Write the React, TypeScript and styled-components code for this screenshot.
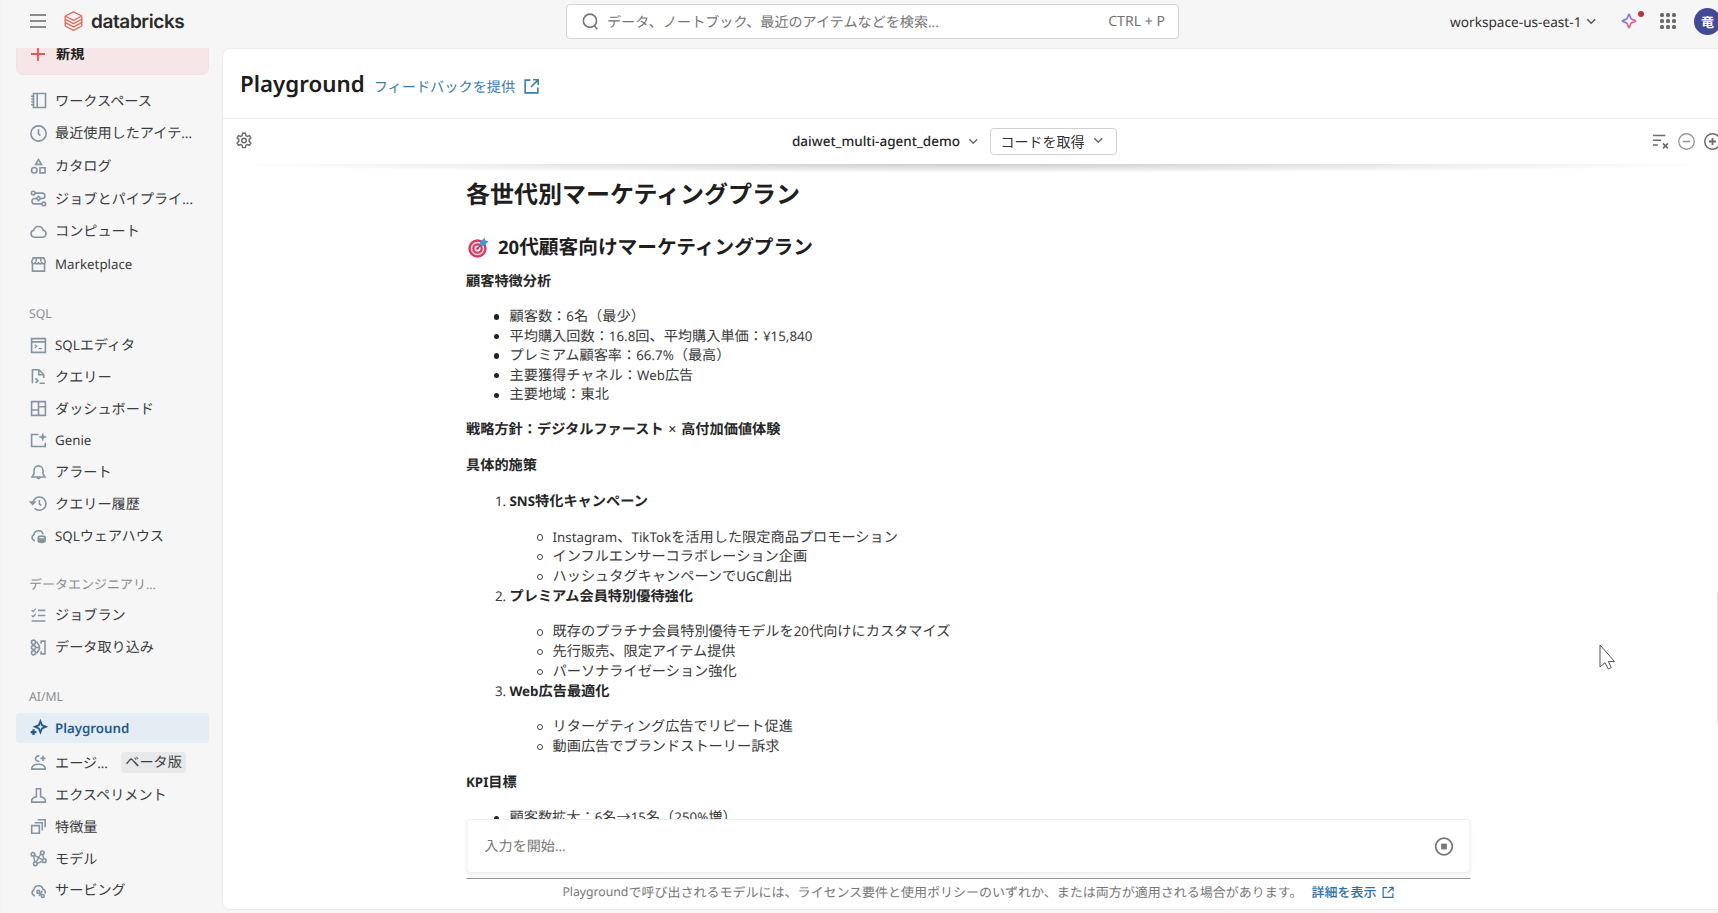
import React from 'react';
import styled, { createGlobalStyle, css } from 'styled-components';

const GlobalStyle = createGlobalStyle`
  *, *::before, *::after { box-sizing: border-box; }
  html, body { margin: 0; padding: 0; overflow: hidden; background: #f6f6f6; }
  body {
    font-family: "Noto Sans", "Noto Sans CJK JP", sans-serif;
    font-size: 14.15px;
    color: #333;
    text-rendering: geometricPrecision;
  }
  h1, h2, h3, p, ul, ol { margin: 0; padding: 0; font-weight: inherit; }
`;

/* Latin runs are set slightly smaller than the surrounding Japanese. */
const Latin = styled.span<{ $scale: number }>`
  font-size: ${(p) => p.$scale}em;
`;

function T({ children, scale = 0.94 }: { children: string; scale?: number }) {
  const parts = children.split(/([\x20-\x7e¥]+)/).filter(Boolean);
  return (
    <>
      {parts.map((part, i) =>
        /^[\x20-\x7e¥]/.test(part) ? (
          <Latin key={i} $scale={scale}>{part}</Latin>
        ) : (
          <React.Fragment key={i}>{part}</React.Fragment>
        ),
      )}
    </>
  );
}

/* ---------- icons ---------- */

const Svg = styled.svg<{ $w?: number }>`
  display: block;
  flex: none;
  width: ${(p) => p.$w ?? 18}px;
  height: ${(p) => p.$w ?? 18}px;
  fill: none;
  stroke: currentColor;
  stroke-width: 1.5;
  overflow: visible;
`;

const icons: Record<string, React.ReactNode> = {
  workspace: <><path d="M3.2 1.4h11.400v13.200H3.200zM6.8 1.400v13.200" /><path d="M1 4h3M1 6.700h3M1 9.300h3M1 12h3" strokeWidth="1.2" /></>,
  clock: <><circle cx="8" cy="8" r="7.2" /><path d="M8 4v4.2l1.800 1.800" /></>,
  catalog: <><path d="M8 1.4 10.8 6H5.2z" /><circle cx="4" cy="11.5" r="2.6" /><path d="M9.4 9.2h4.8v4.8H9.4z" /></>,
  jobs: <><circle cx="3" cy="2.9" r="1.7" /><circle cx="13" cy="13.1" r="1.7" /><path d="M4.7 2.9h6.8a2.5 2.5 0 0 1 0 5.1H10M6 8H4.4a2.5 2.5 0 0 0 0 5.1h6.8M8 6l2 2-2 2-2-2z" /></>,
  cloud: <path d="M4 13.4a3.300 3.300 0 0 1-.5-6.500 4.600 4.600 0 0 1 9 0 3.300 3.300 0 0 1-.5 6.500z" />,
  market: <><path d="M2.3 7v7.2h11.4V7M3 1.8h10l1.4 3.6c0 2.3-3.1 2.6-3.2.3 0 2.3-3.1 2.3-3.2 0 0 2.3-3.1 2.3-3.2 0-.1 2.3-3.2 2-3.2-.3z" /><path d="M5.8 2v3.5M10.2 2v3.5" /></>,
  editor: <><path d="M1.5 1.500h13v13h-13zM1.500 4.600h13" /><path d="m4.5 7.2 1.8 1.6-1.8 1.6M8 10.9h3.2" strokeWidth="1.2" /></>,
  query: <><path d="M2.3 14.3V1.7h6.2l4.4 4.4v3.2M8.2 1.9v4.4h4.6" /><path d="m5.2 9.8 2.3 2.1-2.3 2.1M9 14.3h5" /></>,
  dashboard: <path d="M1.500 1.500h13v13h-13zM8 1.500v13M1.500 9.400H8M8 6.300h6.500" />,
  genie: <><path d="M8 2.4H1.500v11.200h12.800V10" /><path d="m12 1.2.9 2.6 2.6.9-2.6.9-.9 2.6-.9-2.6-2.6-.9 2.6-.9z" fill="currentColor" strokeWidth=".5" /></>,
  bell: <><path d="M2 12.2h12l-1.8-3V6a4.2 4.2 0 0 0-8.4 0v3.2z" /><path d="M6.3 12.5a1.8 1.8 0 0 0 3.4 0" /></>,
  history: <><path d="M2.6 8a6.2 6.2 0 1 1 1.7 4.4M8.8 4.8v3.6l1.8 1.5" /><path d="m.6 6.7 2 2.1 2-2.1z" fill="currentColor" /></>,
  warehouse: <><path d="M4.7 12.8H4a3 3 0 0 1-.3-5.6 4.4 4.4 0 0 1 8.6-.3" /><ellipse cx="11" cy="10" rx="3.2" ry="1.4" /><path d="M7.8 10v3.2c0 1.7 6.4 1.7 6.4 0V10M7.8 12.2c.8 1 5.6 1 6.4 0" /></>,
  runs: <><path d="M7.5 3.2h7M7.5 8h7M1.5 13.2h13" /><path d="m1.5 3.1 1.4 1.3 2.5-2.8M1.5 7.9l1.4 1.3 2.5-2.8" strokeWidth="1.2" /></>,
  ingest: <><circle cx="3.3" cy="3" r="1.9" /><circle cx="3.3" cy="8" r="1.9" /><circle cx="3.3" cy="13" r="1.9" /><path d="M5.2 3h1.4l2.2 3.5v3L6.6 13H5.2M5.2 8h3.6M10.5 4.5V2h3.6v12h-3.6v-2.5" /></>,
  playground: <><path d="m9.8 1.2 1.5 3.7L15 6.4l-3.7 1.5-1.5 3.7-1.5-3.7-3.7-1.5 3.7-1.5z" strokeWidth="1.7" /><path d="M3.3 8.8v5.4M.6 11.5H6" strokeWidth="2.1" /></>,
  agent: <><path d="M1.6 14.2h12.8c0-3-2.6-4.6-6.4-4.6s-6.4 1.6-6.4 4.6z" /><path d="M8.8 1.8C4 1.2 4 7.6 8.8 6.8M12.2 1.6v5M9.8 4.1h4.8" /></>,
  experiment: <path d="M5.2 1.7h5.6M6 1.7v7.5l-2.8.9-1.6 2v2.1h12.8v-2.1l-1.6-2-2.8-.9V1.7" />,
  features: <path d="M1.6 7.2h7.2v7.2H1.6zM4.4 4.5h7.2v7.2M7.3 1.7h7v7" />,
  models: <><circle cx="2.8" cy="4" r="1.7" /><circle cx="11.6" cy="2.6" r="1.7" /><circle cx="13.4" cy="10" r="1.7" /><circle cx="5" cy="13" r="1.7" /><path d="m4.3 5 7.6 4.3M10.2 3.6 5.7 11.6M12 4.3l1 4.1M3.3 5.6l1.3 5.8M6.7 12.6l5.2-2" strokeWidth="1.3" /></>,
  serving: <><path d="M4.7 12.8H4a3 3 0 0 1-.3-5.6 4.4 4.4 0 0 1 8.6-.3c2.6 1 2.3 3 1.7 4" /><circle cx="7.8" cy="9.3" r="1.4" /><circle cx="12" cy="13.2" r="1.4" /><path d="m8.6 10.3 2.5 2.1M11.5 8.2 8.6 13" /></>,
  gear: <><path d="M6.8 1.2h2.4l.4 2 1.3.7 2-.7 1.2 2-1.5 1.5v1.5l1.5 1.5-1.2 2.1-2-.7-1.3.8-.4 2H6.8l-.4-2-1.3-.8-2 .7-1.2-2.1 1.5-1.5V6.7L1.9 5.2l1.2-2 2 .7 1.3-.7z" strokeWidth="1.3" /><circle cx="8" cy="7.6" r="2" strokeWidth="1.3" /></>,
  external: <><path d="M7 2H2v12h12V9" /><path d="M9.5 1.7h4.8v4.8M14 2 7.5 8.5" /></>,
  chevron: <path d="m3 5.5 5 5 5-5" strokeWidth="1.9" />,
  search: <><circle cx="7.5" cy="7.3" r="6.2" /><path d="m11.6 12 2.9 3" /></>,
  clear: <><path d="M1 2.3h11.5M1 6.8h7.5M1 11.3h4.5" /><path d="m10.3 9.8 4.6 4.7M14.9 9.8l-4.6 4.7" /></>,
  minus: <><circle cx="8" cy="8" r="7.3" strokeWidth="1.3" /><path d="M4.5 8h7" /></>,
  plus: <><circle cx="8" cy="8" r="7.3" strokeWidth="1.4" /><path d="M4.7 8h6.6M8 4.7v6.6" strokeWidth="1.7" /></>,
  stop: <><circle cx="8" cy="8" r="7" /><path d="M5.6 5.6h4.8v4.8H5.6z" fill="currentColor" stroke="none" /></>,
  add: <path d="M8 1v14M1 8h14" strokeWidth="1.8" />,
};

function Icon({ name, w }: { name: string; w?: number }) {
  return <Svg viewBox="0 0 16 16" $w={w}>{icons[name]}</Svg>;
}

/* ---------- top bar ---------- */

const Shell = styled.div`
  width: 1718px;
  height: 913px;
  overflow: hidden;
  display: flex;
  flex-direction: column;
  border-left: 3px solid #f2f4f5;
  background: #f6f6f6;
  position: relative;
`;

const TopBar = styled.header`
  height: 48px;
  flex: none;
  display: grid;
  grid-template-columns: 563px 613px 1fr;
  padding-bottom: 5px;
`;

const Brand = styled.div`
  display: flex;
  align-items: center;
  padding: 0 0 1px 27px;
`;

const Burger = styled.span`
  width: 16px;
  height: 14px;
  border-top: 2px solid #8a8a8a;
  border-bottom: 2px solid #8a8a8a;
  display: flex;
  align-items: center;
  margin-right: 18px;
  &::after { content: ''; height: 2px; flex: 1; background: #8a8a8a; }
`;

const BrandName = styled.span`
  font: 600 19px/24px Inter, sans-serif;
  letter-spacing: -0.4px;
  color: #2b2b2b;
  margin: 1px 0 0 8px;
`;

const SearchBox = styled.div`
  margin-top: 4px;
  height: 35px;
  border: 1px solid #d3d5d6;
  border-radius: 4px;
  background: #fff;
  display: flex;
  align-items: center;
  padding: 0 13px 0 15px;
  font-size: 14.1px;
  color: #757575;
`;

const SearchText = styled.span`
  flex: 1;
  margin-left: 8px;
`;

const Tools = styled.div`
  display: flex;
  align-items: center;
  justify-content: flex-end;
  margin-right: -3px;
  padding-bottom: 1px;
  color: #555;
`;

const WorkspaceName = styled.span`
  font-size: 13.65px;
  color: #333;
  margin-right: 3px;
`;

const SparkleWrap = styled.span`
  position: relative;
  margin: 0 23px 0 24px;
`;

const Dot = styled.i`
  position: absolute;
  width: 6px;
  height: 6px;
  border-radius: 50%;
  background: #b8343f;
  right: -7px;
  top: -2px;
`;

const AppGrid = styled.span`
  display: grid;
  grid-template-columns: repeat(3, 4px);
  gap: 2px;
  margin-right: 18px;
  i { width: 4px; height: 4px; border-radius: 1.5px; background: #6a6a6a; }
`;

const Avatar = styled.span`
  width: 27px;
  height: 27px;
  flex: none;
  border-radius: 50%;
  background: #434a94;
  color: #fff;
  font-size: 13px;
  font-weight: 700;
  display: grid;
  place-items: center;
`;

/* ---------- sidebar ---------- */

const Body = styled.div`
  flex: 1;
  min-height: 0;
  display: flex;
`;

const Sidebar = styled.nav`
  width: 219px;
  flex: none;
  padding: 0 13px;
  color: #8594a3;
`;

const NewButton = styled.div`
  height: 27px;
  border: 1px solid #f8dfdf;
  border-top: 0;
  border-radius: 0 0 7px 7px;
  background: #f7e6e7;
  display: flex;
  align-items: center;
  gap: 10px;
  padding: 0 14px 14px 13px;
  color: #e0555a;
  overflow: hidden;
  span { color: #222; font-weight: 700; }
`;

const Group = styled.div<{ $gap: number }>`
  padding-top: ${(p) => p.$gap}px;
`;

const GroupLabel = styled.div<{ $h: number }>`
  height: ${(p) => p.$h}px;
  line-height: 20px;
  padding-left: 13px;
  font-size: 13px;
  color: #8a8d90;
`;

const NavItem = styled.div<{ $h: number; $active?: boolean }>`
  height: ${(p) => p.$h}px;
  display: flex;
  align-items: center;
  gap: 8.5px;
  padding-left: 13.5px;
  white-space: nowrap;
  > span { color: #3a3d40; }
  ${(p) =>
    p.$active &&
    css`
      background: #e6ecf3;
      border-radius: 4px;
      color: #1f5b8f;
      margin-bottom: 3px;
      > span { color: #1f5b8f; font-weight: 600; }
    `}
`;

const Badge = styled.em`
  font-style: normal;
  color: #3a3d40;
  background: #e8e9ea;
  border-radius: 4px;
  line-height: 21px;
  padding: 0 4.5px;
  margin-left: 4.5px;
`;

/* ---------- main panel ---------- */

const Panel = styled.main`
  flex: 1;
  min-width: 0;
  height: 862px;
  background: #fff;
  border: 1px solid #eaedef;
  border-right: 0;
  border-radius: 8px 0 0 8px;
  display: flex;
  flex-direction: column;
`;

const PanelHeader = styled.div`
  height: 70px;
  flex: none;
  border-bottom: 1px solid #e9ecee;
  display: flex;
  align-items: center;
  padding: 0 0 0 17px;
  color: #3a7db3;
`;

const Title = styled.h1`
  font-size: 22.3px;
  font-weight: 600;
  line-height: 30px;
  color: #1c1c1c;
  margin-right: 9px;
`;

const Feedback = styled.a`
  font-size: 14.2px;
  display: flex;
  align-items: center;
  gap: 8px;
  padding-top: 6px;
`;

const Toolbar = styled.div`
  height: 45px;
  flex: none;
  display: grid;
  grid-template-columns: 557px 1fr auto;
  align-items: center;
  padding: 0 0 1px 12px;
  color: #6a6a6a;
`;

const ModelPicker = styled.div`
  display: flex;
  align-items: center;
`;

const ModelName = styled.span`
  font-size: 13.5px;
  font-weight: 500;
  color: #262626;
  margin-right: 7px;
`;

const CodeButton = styled.button`
  margin-left: 11px;
  width: 127px;
  height: 27px;
  padding: 0 12px 1px 9px;
  border: 1px solid #cfd1d3;
  border-radius: 4px;
  background: #fff;
  font: inherit;
  font-size: 14px;
  color: #333;
  display: flex;
  align-items: center;
  justify-content: space-between;
  svg { color: #6a6a6a; }
`;

const ToolIcons = styled.div`
  display: flex;
  align-items: center;
  gap: 9px;
  margin-right: -3px;
  svg:nth-child(2) { color: #999; }
`;

const Scroll = styled.div`
  flex: 1;
  min-height: 0;
  overflow: hidden;
  position: relative;
  padding-right: 5px;
  &::before {
    content: '';
    position: absolute;
    left: 0;
    right: 0;
    top: 0;
    height: 9px;
    background: radial-gradient(farthest-side at 50% 0, rgba(0, 0, 0, 0.2), rgba(0, 0, 0, 0));
  }
`;

const Article = styled.article`
  width: 1004px;
  margin: 0 auto;
  padding-top: 15px;
  font-size: 14.19px;
  line-height: 19.6px;
  color: #3b3b3b;
`;

const H1 = styled.h1`
  font-size: 24px;
  line-height: 32px;
  font-weight: 700;
  color: #1e1e1e;
`;

const H2 = styled.h2`
  margin-top: 21.5px;
  font-size: 19.7px;
  line-height: 28px;
  font-weight: 700;
  color: #1e1e1e;
  display: flex;
  align-items: center;
  svg { margin: 0 9px 0 2px; }
`;

const Strong = styled.p<{ $top?: number }>`
  margin-top: ${(p) => p.$top ?? 16}px;
  font-weight: 700;
  color: #262626;
`;

const Times = styled.span`
  font-weight: 400;
  margin: 0 1px;
`;

const List = styled.ul`
  list-style: none;
  margin-top: 16px;
  padding-left: 27.5px;
`;

const Item = styled.li<{ $hollow?: boolean }>`
  display: flex;
  align-items: center;
  white-space: nowrap;
  &::before {
    content: '';
    flex: none;
    width: 5.5px;
    height: 5.5px;
    border-radius: 50%;
    margin-right: 10.5px;
    ${(p) => (p.$hollow ? 'width: 6.5px; height: 6.5px; margin-right: 9.5px; border: 1.4px solid #444;' : 'background: #222;')}
  }
`;

const Steps = styled.ol`
  list-style: none;
  margin-top: 16px;
  padding-left: 29px;
`;

const StepHead = styled.div`
  display: grid;
  grid-template-columns: 14.5px 1fr;
  b { font-weight: 700; color: #262626; }
`;

const SubList = styled(List)`
  margin-top: 15.9px;
  line-height: 19.8px;
  padding-left: 41.5px;
`;

const Dock = styled.div`
  width: 1004px;
  margin: 0 auto;
  transform: translateX(-2.5px);
  flex: none;
  height: 90px;
`;

const Composer = styled.div`
  height: 54px;
  border: 1px solid #eceff1;
  border-radius: 4px;
  box-shadow: 0 2px 3px rgba(0, 0, 0, 0.06);
  display: flex;
  align-items: center;
  justify-content: space-between;
  padding: 0 16px 0 17.5px;
  color: #777;
  font-size: 14.1px;
`;

const Rule = styled.hr`
  margin: 5px 0 2px;
  border: 0;
  height: 1px;
  background: #999;
`;

const Notice = styled.p`
  display: flex;
  align-items: center;
  justify-content: center;
  padding-left: 21px;
  font-size: 13.01px;
  line-height: 22px;
  color: #777;
  white-space: nowrap;
  a { color: #2d70a8; font-weight: 500; margin: 0 5px 0 9px; }
  svg { color: #2d70a8; }
`;

const Pointer = styled.svg`
  position: absolute;
  left: 1596px;
  top: 644px;
  width: 17px;
  height: 27px;
`;

const Thumb = styled.i`
  position: absolute;
  right: 0;
  top: 593px;
  width: 1px;
  height: 131px;
  background: #e4e4e4;
`;

/* ---------- data ---------- */

type Nav = { icon: string; label: string; badge?: string; active?: boolean; h?: number };
type NavGroup = { label?: string; labelH: number; gap: number; h: number; items: Nav[] };

const nav: NavGroup[] = [
  {
    gap: 9.3, labelH: 0, h: 32.7,
    items: [
      { icon: 'workspace', label: 'ワークスペース' },
      { icon: 'clock', label: '最近使用したアイテ...' },
      { icon: 'catalog', label: 'カタログ' },
      { icon: 'jobs', label: 'ジョブとパイプライ...' },
      { icon: 'cloud', label: 'コンピュート' },
      { icon: 'market', label: 'Marketplace' },
    ],
  },
  {
    label: 'SQL', gap: 22.5, labelH: 26.2, h: 31.8,
    items: [
      { icon: 'editor', label: 'SQLエディタ' },
      { icon: 'query', label: 'クエリー' },
      { icon: 'dashboard', label: 'ダッシュボード' },
      { icon: 'genie', label: 'Genie' },
      { icon: 'bell', label: 'アラート' },
      { icon: 'history', label: 'クエリー履歴' },
      { icon: 'warehouse', label: 'SQLウェアハウス' },
    ],
  },
  {
    label: 'データエンジニアリ...', gap: 22.2, labelH: 25.6, h: 31.8,
    items: [
      { icon: 'runs', label: 'ジョブラン' },
      { icon: 'ingest', label: 'データ取り込み' },
    ],
  },
  {
    label: 'AI/ML', gap: 23, labelH: 27.3, h: 31.7,
    items: [
      { icon: 'playground', label: 'Playground', active: true, h: 30 },
      { icon: 'agent', label: 'エージ...', badge: 'ベータ版', h: 33 },
      { icon: 'experiment', label: 'エクスペリメント' },
      { icon: 'features', label: '特徴量' },
      { icon: 'models', label: 'モデル' },
      { icon: 'serving', label: 'サービング' },
    ],
  },
];

const traits = [
  '顧客数：6名（最少）',
  '平均購入回数：16.8回、平均購入単価：¥15,840',
  'プレミアム顧客率：66.7%（最高）',
  '主要獲得チャネル：Web広告',
  '主要地域：東北',
];

const steps = [
  { title: 'SNS特化キャンペーン', items: ['Instagram、TikTokを活用した限定商品プロモーション', 'インフルエンサーコラボレーション企画', 'ハッシュタグキャンペーンでUGC創出'] },
  { title: 'プレミアム会員特別優待強化', items: ['既存のプラチナ会員特別優待モデルを20代向けにカスタマイズ', '先行販売、限定アイテム提供', 'パーソナライゼーション強化'] },
  { title: 'Web広告最適化', items: ['リターゲティング広告でリピート促進', '動画広告でブランドストーリー訴求'] },
];

export default function App() {
  return (
    <>
      <GlobalStyle />
      <Shell>
        <TopBar>
          <Brand>
            <Burger />
            <svg width="19" height="20" viewBox="0 0 19 20" fill="none" stroke="#e2665a" strokeWidth="1.3" strokeLinejoin="round">
              <path d="M1.2 5 9.5 .8l8.3 4.2-8.3 4.4z" />
              <path d="M1.2 5v3.2l8.3 4.4 8.3-4.4V5.5" />
              <path d="M1.2 8.2v3.4l8.3 4.3 8.3-4.3V8.2" />
              <path d="M1.2 11.6V15l8.3 4.3 8.3-4.3v-3.4" />
            </svg>
            <BrandName>databricks</BrandName>
          </Brand>
          <SearchBox>
            <Icon name="search" w={17} />
            <SearchText><T>データ、ノートブック、最近のアイテムなどを検索...</T></SearchText>
            <T scale={1}>CTRL + P</T>
          </SearchBox>
          <Tools>
            <WorkspaceName>workspace-us-east-1</WorkspaceName>
            <Icon name="chevron" w={12.5} />
            <SparkleWrap>
              <svg width="16" height="16" viewBox="0 0 16 16" fill="none" style={{ display: 'block' }}>
                <defs>
                  <linearGradient id="spark" x1="0" y1="0" x2="1" y2="1">
                    <stop offset="0.25" stopColor="#6a7fe0" />
                    <stop offset="0.5" stopColor="#b569c8" />
                    <stop offset="0.8" stopColor="#ee5f6c" />
                  </linearGradient>
                </defs>
                <path d="M8 1.2c.5 0 1.5 4.2 2.2 4.7C10.9 6.5 14.8 7.5 14.8 8s-3.9 1.5-4.6 2.1C9.5 10.7 8.5 14.8 8 14.8S6.5 10.7 5.8 10.1C5.1 9.5 1.2 8.5 1.2 8s3.9-1.5 4.6-2.1C6.5 5.4 7.5 1.2 8 1.2z" stroke="url(#spark)" strokeWidth="1.7" />
              </svg>
              <Dot />
            </SparkleWrap>
            <AppGrid>{Array.from({ length: 9 }, (_, i) => <i key={i} />)}</AppGrid>
            <Avatar>竜</Avatar>
          </Tools>
        </TopBar>

        <Body>
          <Sidebar>
            <NewButton><Icon name="add" w={16} /><span>新規</span></NewButton>
            {nav.map((g, gi) => (
              <Group key={gi} $gap={g.gap}>
                {g.label && <GroupLabel $h={g.labelH}><T>{g.label}</T></GroupLabel>}
                {g.items.map((n) => (
                  <NavItem key={n.label} $h={n.h ?? g.h} $active={n.active}>
                    <Icon name={n.icon} w={17} />
                    <span><T>{n.label}</T></span>
                    {n.badge && <Badge>{n.badge}</Badge>}
                  </NavItem>
                ))}
              </Group>
            ))}
          </Sidebar>

          <Panel>
            <PanelHeader>
              <Title>Playground</Title>
              <Feedback>フィードバックを提供<Icon name="external" w={17} /></Feedback>
            </PanelHeader>
            <Toolbar>
              <Icon name="gear" />
              <ModelPicker>
                <ModelName>daiwet_multi-agent_demo</ModelName>
                <Icon name="chevron" w={12.5} />
                <CodeButton>コードを取得<Icon name="chevron" w={12.5} /></CodeButton>
              </ModelPicker>
              <ToolIcons>
                <Icon name="clear" w={17} />
                <Icon name="minus" w={17} />
                <Icon name="plus" w={17} />
              </ToolIcons>
            </Toolbar>
            <Scroll>
              <Article>
                <H1>各世代別マーケティングプラン</H1>
                <H2>
                  <svg width="21" height="21" viewBox="0 0 21 21" fill="none">
                    <circle cx="9.5" cy="11.5" r="8" stroke="#d83a62" strokeWidth="2.4" fill="#f6dbe3" />
                    <circle cx="9.5" cy="11.5" r="4.2" stroke="#d83a62" strokeWidth="2.2" fill="#f9e6ec" />
                    <circle cx="9.5" cy="11.5" r="1.2" fill="#b82d55" />
                    <path d="m9.5 11.5 6-6.5" stroke="#5b5a72" strokeWidth="1.3" />
                    <path d="m12 5.200 4.600-4.700.8 2.900 3.200.9-4.700 4.700-3.500-.4z" fill="#3f97dc" />
                  </svg>
                  <span><T>20代顧客向けマーケティングプラン</T></span>
                </H2>
                <Strong $top={10}>顧客特徴分析</Strong>
                <List>{traits.map((t) => <Item key={t}><span><T>{t}</T></span></Item>)}</List>
                <Strong $top={15}>戦略方針：デジタルファースト <Times>×</Times> 高付加価値体験</Strong>
                <Strong $top={16.8}>具体的施策</Strong>
                <Steps>
                  {steps.map((s, i) => (
                    <li key={s.title}>
                      <StepHead><span><T>{`${i + 1}.`}</T></span><b><T>{s.title}</T></b></StepHead>
                      <SubList>{s.items.map((t) => <Item key={t} $hollow><span><T>{t}</T></span></Item>)}</SubList>
                    </li>
                  ))}
                </Steps>
                <Strong><T>KPI目標</T></Strong>
                <List><Item><span><T>顧客数拡大：6名→15名（250%増）</T></span></Item></List>
              </Article>
            </Scroll>
            <Dock>
              <Composer><span><T>入力を開始...</T></span><Icon name="stop" w={19} /></Composer>
              <Rule />
              <Notice>
                <T>Playgroundで呼び出されるモデルには、ライセンス要件と使用ポリシーのいずれか、または両方が適用される場合があります。</T>
                <a>詳細を表示</a>
                <Icon name="external" w={13} />
              </Notice>
            </Dock>
          </Panel>
        </Body>
        <Thumb />
        <Pointer viewBox="0 0 17 27">
          <path d="M1 1v22l5-4.3 3.3 6.3 3-1.5-3-6h6.2z" fill="#fff" stroke="#555" strokeWidth="1" />
        </Pointer>
      </Shell>
    </>
  );
}
